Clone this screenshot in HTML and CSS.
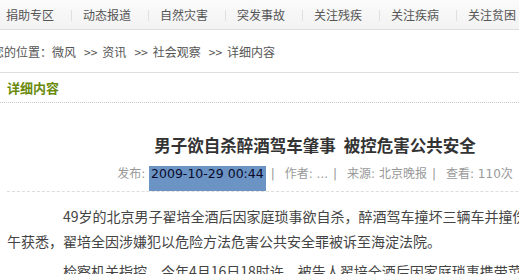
FILE: index.html
```html
<!DOCTYPE html>
<html lang="zh-CN">
<head>
  <meta charset="UTF-8">
  <title>男子欲自杀醉酒驾车肇事 被控危害公共安全</title>
  <link rel="stylesheet" href="styles.css">
</head>
<body>
  <div id="nav"><a href="#">捐助专区</a><span class="bar"></span><a href="#">动态报道</a><span class="bar"></span><a href="#">自然灾害</a><span class="bar"></span><a href="#">突发事故</a><span class="bar"></span><a href="#">关注残疾</a><span class="bar"></span><a href="#">关注疾病</a><span class="bar"></span><a href="#">关注贫困</a></div>

  <div id="crumb">
    您的位置：<a href="#">微风</a><span class="arrow">&gt;&gt;</span><a href="#">资讯</a><span class="arrow">&gt;&gt;</span><a href="#">社会观察</a><span class="arrow">&gt;&gt;</span>详细内容
  </div>

  <div id="boxTitle">详细内容</div>

  <div id="article">
    <h1>男子欲自杀醉酒驾车肇事<span class="gap"></span>被控危害公共安全</h1>
    <div class="meta">
      发布: <span class="date">2009-10-29 00:44</span><span class="sep">|</span>作者: ...<span class="sep">|</span>来源: 北京晚报<span class="sep">|</span>查看: 110次
    </div>
    <div class="content">
      <p>49岁的北京男子翟培全酒后因家庭琐事欲自杀，醉酒驾车撞坏三辆车并撞伤行人。昨天上午获悉，翟培全因涉嫌犯以危险方法危害公共安全罪被诉至海淀法院。</p>
      <p>检察机关指控，今年4月16日18时许，被告人翟培全酒后因家庭琐事携带菜刀驾车离家。</p>
    </div>
  </div>
</body>
</html>
```

FILE: styles.css
```css
body {
  margin: 0;
  padding: 0;
  background: #fff;
  color: #555;
  font-family: "Noto Sans CJK SC", sans-serif;
  font-size: 12px;
  overflow: hidden;
}

a {
  color: #555;
  text-decoration: none;
}

#nav {
  height: 29px;
  line-height: 29px;
  padding-left: 6px;
  white-space: nowrap;
  background: linear-gradient(#fbfbfb, #f2f2f2);
  border-bottom: 1px solid #dedede;
}

#nav .bar {
  display: inline-block;
  width: 1px;
  height: 11px;
  margin: 0 11px 0 17px;
  vertical-align: -1px;
  background: #e0e0e0;
}

#crumb {
  margin-left: -8px;
  padding: 14px 0 12px;
  line-height: 16px;
  white-space: nowrap;
  border-bottom: 1px solid #ddd;
}

#crumb .arrow {
  margin: 0 5px 0 8px;
}

#boxTitle {
  padding: 7px 7px 7px;
  line-height: 15px;
  font-size: 13px;
  font-weight: bold;
  color: #6a8a0a;
  border-bottom: 1px dotted #c8c8c8;
}

#article {
  width: 616px;
  padding-left: 7px;
}

#article h1 {
  margin: 30px 0 0;
  font-size: 16.5px;
  line-height: 24px;
  color: #333;
  text-align: center;
  white-space: nowrap;
}

#article h1 .gap {
  display: inline-block;
  width: 8px;
}

.meta {
  margin-top: 9px;
  line-height: 16px;
  color: #999;
  text-align: center;
  white-space: nowrap;
  font-family: "DejaVu Sans", "Noto Sans CJK SC", sans-serif;
  font-size: 12px;
  border-bottom: 1px dashed #ddd;
}

.meta .date {
  display: inline-block;
  padding: 0 2px 9px;
  color: #0a0a2a;
  background: #6b93c4;
  font-size: 12.5px;
}

.meta .sep {
  margin: 0 10px 0 5px;
}

.content {
  padding-top: 7px;
  padding-right: 8px;
}

.content p {
  margin: 5px 0;
  font-size: 14px;
  line-height: 25px;
  color: #444;
  text-indent: 4em;
}
```
